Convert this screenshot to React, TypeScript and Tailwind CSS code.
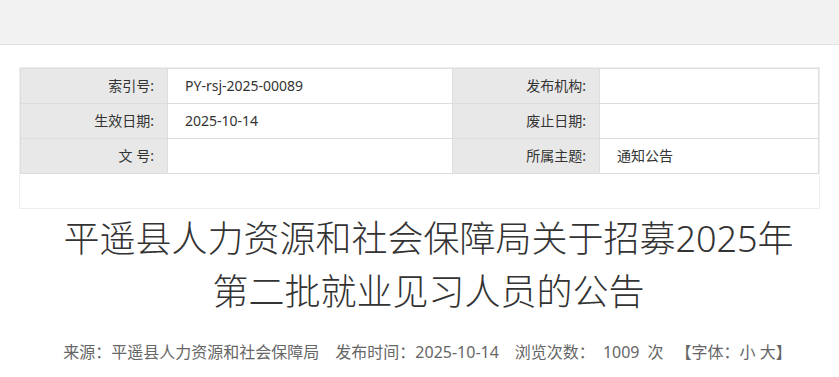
const rows = [
  { a: '索引号:', b: 'PY-rsj-2025-00089', c: '发布机构:', d: '' },
  { a: '生效日期:', b: '2025-10-14', c: '废止日期:', d: '' },
  { a: '文 号:', b: '', c: '所属主题:', d: '通知公告' },
];

const font = { fontFamily: '"Noto Sans", "Noto Sans CJK SC", sans-serif' };

export default function App() {
  return (
    <div className="min-h-screen bg-white text-[#333]" style={font}>
      <div className="h-[45px] bg-[#f2f2f2] border-b border-[#e3e3e3]" />

      <div className="mx-[19px] mt-[22px] border border-[#eeeeee] pb-[34px]">
        <table className="w-full table-fixed border-collapse text-[14px]">
          <colgroup>
            <col className="w-[147px]" />
            <col className="w-[285px]" />
            <col className="w-[147px]" />
            <col />
          </colgroup>
          <tbody>
            {rows.map((r) => (
              <tr key={r.a} className="h-[35px]">
                <td className="border border-[#dddddd] bg-[#e8e8e8] pr-[13px] pb-[2px] text-right">{r.a}</td>
                <td className="border border-[#dddddd] pl-[17px] pb-[2px]">{r.b}</td>
                <td className="border border-[#dddddd] bg-[#e8e8e8] pr-[13px] pb-[2px] text-right">{r.c}</td>
                <td className="border border-[#dddddd] pl-[17px] pb-[2px]">{r.d}</td>
              </tr>
            ))}
          </tbody>
        </table>
      </div>

      <h1 className="mt-[3px] pl-[18px] text-center text-[36px] leading-[53px] font-light text-[#333]">
        平遥县人力资源和社会保障局关于招募2025年
        <br />
        第二批就业见习人员的公告
      </h1>

      <div className="mt-[22px] pl-[16px] text-center text-[16px] leading-[24px] text-[#666]">
        <span>来源：平遥县人力资源和社会保障局</span>
        <span className="ml-4">发布时间：2025-10-14</span>
        <span className="ml-4">
          浏览次数：<span className="mx-2">1009</span>次
        </span>
        <span className="ml-3">【字体：小 大】</span>
      </div>
    </div>
  );
}
